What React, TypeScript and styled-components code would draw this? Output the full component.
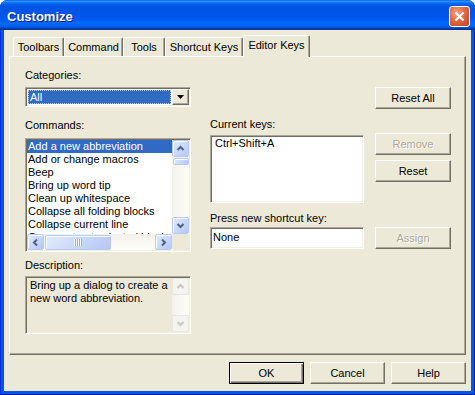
import React from "react";
import styled, { createGlobalStyle, css } from "styled-components";

const GlobalStyle = createGlobalStyle`
  html, body {
    margin: 0;
    padding: 0;
    background: #ffffff;
  }
  body {
    font-family: "Liberation Sans", Arial, sans-serif;
    font-size: 11px;
    color: #000;
  }
  * {
    box-sizing: border-box;
  }
`;

const sunken = css`
  border: 1px solid;
  border-color: #aca899 #ffffff #ffffff #aca899;
  box-shadow: inset 1px 1px #716f64, inset -1px -1px #f1efe2;
  padding: 1px;
`;

const raised = css`
  border: 1px solid;
  border-color: #ffffff #716f64 #716f64 #ffffff;
  box-shadow: inset -1px -1px #aca899;
`;

const Window = styled.div`
  width: 475px;
  height: 395px;
  display: flex;
  flex-direction: column;
  background: #0055ea;
  border-radius: 8px 8px 0 0;
  overflow: hidden;
  box-shadow: inset 1px 0 #0831d9, inset -1px 0 #001ea0, inset 0 -1px #001ea0;
`;

const TitleBar = styled.div`
  height: 30px;
  flex: none;
  display: flex;
  align-items: center;
  justify-content: space-between;
  padding: 2px 5px 0 7px;
  background: linear-gradient(
    180deg,
    #0058ee 0%,
    #3593ff 4%,
    #288eff 6%,
    #127dff 8%,
    #036ffc 10%,
    #0262ee 14%,
    #0057e5 20%,
    #0054e3 24%,
    #0055eb 56%,
    #005bf5 66%,
    #026afe 76%,
    #0062ef 86%,
    #0052d6 92%,
    #0040ab 94%,
    #003092 100%
  );
`;

const Title = styled.span`
  color: #ffffff;
  font-family: "Liberation Sans", Arial, sans-serif;
  font-weight: bold;
  font-size: 13px;
  text-shadow: 1px 1px #0a1883;
`;

const CloseButton = styled.div`
  width: 21px;
  height: 21px;
  border: 1px solid #ffffff;
  border-radius: 3px;
  background: radial-gradient(circle at 35% 30%, #f2a386 0%, #de6a43 45%, #c3421a 100%);
  display: flex;
  align-items: center;
  justify-content: center;
`;

const Body = styled.div`
  flex: 1;
  margin: 0 4px 4px;
  background: #ece9d8;
  padding: 5px 5px 0;
  display: flex;
  flex-direction: column;
`;

const TabStrip = styled.div`
  height: 21px;
  display: flex;
  align-items: flex-end;
  padding-left: 4px;
  position: relative;
  z-index: 1;
`;

const Tab = styled.div<{ $w: number; $active?: boolean }>`
  width: ${(p) => p.$w}px;
  height: ${(p) => (p.$active ? 22 : 19)}px;
  margin-bottom: ${(p) => (p.$active ? -1 : 0)}px;
  padding-top: 3px;
  text-align: center;
  line-height: 13px;
  white-space: nowrap;
  background: #ece9d8;
  border-top: 1px solid #ffffff;
  border-left: 1px solid #ffffff;
  border-right: 1px solid #716f64;
  border-radius: 2px 2px 0 0;
  box-shadow: inset -1px 0 #aca899;
`;

const Panel = styled.div`
  height: 299px;
  flex: none;
  ${raised}
  padding: 12px 0 0 15px;
  display: flex;
`;

const Column = styled.div<{ $w: number; $ml?: number }>`
  width: ${(p) => p.$w}px;
  margin-left: ${(p) => p.$ml ?? 0}px;
  display: flex;
  flex-direction: column;
`;

const Label = styled.div<{ $mt?: number }>`
  line-height: 13px;
  height: 13px;
  margin-top: ${(p) => p.$mt ?? 0}px;
  white-space: nowrap;
`;

const Combo = styled.div<{ $mt?: number }>`
  ${sunken}
  margin-top: ${(p) => p.$mt ?? 0}px;
  height: 20px;
  background: #ffffff;
  display: flex;
`;

const ComboValue = styled.div`
  flex: 1;
  margin: 1px;
  background: #316ac5;
  color: #ffffff;
  line-height: 12px;
  padding-left: 1px;
  border: 1px dotted #b9c9ea;
`;

const DropButton = styled.div`
  width: 17px;
  ${raised}
  background: #ece9d8;
  display: flex;
  align-items: center;
  justify-content: center;
`;

const ListBox = styled.div<{ $mt?: number }>`
  ${sunken}
  margin-top: ${(p) => p.$mt ?? 0}px;
  height: 114px;
  background: #ffffff;
  display: grid;
  grid-template-columns: 1fr 17px;
  grid-template-rows: 1fr 16px;
`;

const Items = styled.div`
  overflow: hidden;
`;

const Item = styled.div<{ $selected?: boolean }>`
  height: 13px;
  line-height: 13px;
  padding-left: 1px;
  white-space: nowrap;
  background: ${(p) => (p.$selected ? "#316ac5" : "transparent")};
  color: ${(p) => (p.$selected ? "#ffffff" : "#000000")};
`;

const VScroll = styled.div`
  display: flex;
  flex-direction: column;
`;

const HScroll = styled.div`
  display: flex;
`;

const Track = styled.div<{ $horizontal?: boolean }>`
  flex: 1;
  display: flex;
  flex-direction: ${(p) => (p.$horizontal ? "row" : "column")};
  background: linear-gradient(
    ${(p) => (p.$horizontal ? "to bottom" : "to right")},
    #f3f1ea,
    #fefefa
  );
`;

const blueKnob = css`
  background: linear-gradient(135deg, #e3ebfe 0%, #c9d8fc 50%, #b5c8f5 100%);
  border: 1px solid #b7caf5;
  border-radius: 2px;
  box-shadow: inset 1px 1px #ffffff;
`;

const ArrowBox = styled.div<{ $disabled?: boolean; $horizontal?: boolean }>`
  flex: none;
  width: 17px;
  height: ${(p) => (p.$horizontal ? 16 : 17)}px;
  display: flex;
  align-items: center;
  justify-content: center;
  ${(p) =>
    p.$disabled
      ? css`
          background: #f5f4ee;
          border: 1px solid #e9e7de;
          border-radius: 2px;
        `
      : blueKnob}
`;

const Thumb = styled.div<{ $w?: number; $h?: number }>`
  flex: none;
  width: ${(p) => (p.$w ? `${p.$w}px` : "auto")};
  height: ${(p) => (p.$h ? `${p.$h}px` : "auto")};
  margin: 1px 0 0 1px;
  ${blueKnob}
  display: flex;
  align-items: center;
  justify-content: center;
`;

const Grip = styled.span`
  width: 8px;
  height: 7px;
  background: repeating-linear-gradient(to right, #f4f8ff 0 1px, #8db2f7 1px 2px);
`;

const Corner = styled.div`
  background: #ece9d8;
`;

const DescBox = styled.div<{ $mt?: number }>`
  ${sunken}
  margin-top: ${(p) => p.$mt ?? 0}px;
  height: 58px;
  background: #ece9d8;
  display: flex;
`;

const DescText = styled.div`
  flex: 1;
  padding: 1px 3px;
  line-height: 13px;
`;

const KeysBox = styled.div<{ $mt?: number }>`
  ${sunken}
  margin-top: ${(p) => p.$mt ?? 0}px;
  height: 68px;
  background: #ffffff;
  padding: 1px 4px;
  line-height: 13px;
`;

const TextInput = styled.div<{ $mt?: number }>`
  ${sunken}
  margin-top: ${(p) => p.$mt ?? 0}px;
  height: 22px;
  background: #ffffff;
  padding: 3px 2px;
  line-height: 13px;
`;

const Button = styled.button<{ $w?: number; $mt?: number; $default?: boolean }>`
  width: ${(p) => p.$w ?? 76}px;
  height: 22px;
  margin-top: ${(p) => p.$mt ?? 0}px;
  padding: 0;
  font-family: "Liberation Sans", Arial, sans-serif;
  font-size: 11px;
  color: #000000;
  background: #ece9d8;
  ${raised}
  ${(p) =>
    p.$default &&
    css`
      border-color: #000000;
      box-shadow: inset 1px 1px #ffffff, inset -1px -1px #716f64, inset -2px -2px #aca899;
    `}
  &:disabled {
    color: #aca899;
    text-shadow: 1px 1px #ffffff;
  }
`;

const Footer = styled.div`
  margin-top: 7px;
  display: flex;
  justify-content: flex-end;
  gap: 6px;
`;

type Dir = "up" | "down" | "left" | "right";
const turn: Record<Dir, number> = { up: 0, right: 90, down: 180, left: 270 };

const ScrollArrow = ({ dir, disabled }: { dir: Dir; disabled?: boolean }) => (
  <ArrowBox $disabled={disabled} $horizontal={dir === "left" || dir === "right"}>
    <svg width="9" height="9" viewBox="0 0 9 9" style={{ transform: `rotate(${turn[dir]}deg)` }}>
      <polyline
        points="1.5,6 4.5,3 7.5,6"
        fill="none"
        stroke={disabled ? "#cbc9bd" : "#4d6185"}
        strokeWidth="2"
      />
    </svg>
  </ArrowBox>
);

const tabs = [
  { label: "Toolbars", w: 51 },
  { label: "Command", w: 59 },
  { label: "Tools", w: 42 },
  { label: "Shortcut Keys", w: 78 },
  { label: "Editor Keys", w: 67, active: true },
];

const commands = [
  "Add a new abbreviation",
  "Add or change macros",
  "Beep",
  "Bring up word tip",
  "Clean up whitespace",
  "Collapse all folding blocks",
  "Collapse current line",
  "Comment out selected block",
];

export default function App() {
  return (
    <>
      <GlobalStyle />
      <Window>
        <TitleBar>
          <Title>Customize</Title>
          <CloseButton>
            <svg width="11" height="11" viewBox="0 0 11 11">
              <path d="M1.5 1.5 L9.5 9.5 M9.5 1.5 L1.5 9.5" stroke="#ffffff" strokeWidth="2.2" />
            </svg>
          </CloseButton>
        </TitleBar>
        <Body>
          <TabStrip>
            {tabs.map((t) => (
              <Tab key={t.label} $w={t.w} $active={t.active}>
                {t.label}
              </Tab>
            ))}
          </TabStrip>
          <Panel>
            <Column $w={166}>
              <Label>Categories:</Label>
              <Combo $mt={5}>
                <ComboValue>All</ComboValue>
                <DropButton>
                  <svg width="7" height="4" viewBox="0 0 7 4">
                    <path d="M0 0 H7 L3.5 4 Z" fill="#000000" />
                  </svg>
                </DropButton>
              </Combo>
              <Label $mt={12}>Commands:</Label>
              <ListBox $mt={6}>
                <Items>
                  {commands.map((c, i) => (
                    <Item key={c} $selected={i === 0}>
                      {c}
                    </Item>
                  ))}
                </Items>
                <VScroll>
                  <ScrollArrow dir="up" />
                  <Track>
                    <Thumb $h={7} />
                  </Track>
                  <ScrollArrow dir="down" />
                </VScroll>
                <HScroll>
                  <ScrollArrow dir="left" />
                  <Track $horizontal>
                    <Thumb $w={66}>
                      <Grip />
                    </Thumb>
                  </Track>
                  <ScrollArrow dir="right" />
                </HScroll>
                <Corner />
              </ListBox>
              <Label $mt={7}>Description:</Label>
              <DescBox $mt={4}>
                <DescText>
                  Bring up a dialog to create a<br />
                  new word abbreviation.
                </DescText>
                <VScroll>
                  <ScrollArrow dir="up" disabled />
                  <Track />
                  <ScrollArrow dir="down" disabled />
                </VScroll>
              </DescBox>
            </Column>
            <Column $w={154} $ml={19}>
              <Label $mt={49}>Current keys:</Label>
              <KeysBox $mt={4}>Ctrl+Shift+A</KeysBox>
              <Label $mt={9}>Press new shortcut key:</Label>
              <TextInput $mt={2}>None</TextInput>
            </Column>
            <Column $w={76} $ml={11}>
              <Button $mt={18}>Reset All</Button>
              <Button $mt={24} disabled>
                Remove
              </Button>
              <Button $mt={5}>Reset</Button>
              <Button $mt={45} disabled>
                Assign
              </Button>
            </Column>
          </Panel>
          <Footer>
            <Button $w={75} $default>
              OK
            </Button>
            <Button $w={75}>Cancel</Button>
            <Button $w={75}>Help</Button>
          </Footer>
        </Body>
      </Window>
    </>
  );
}
